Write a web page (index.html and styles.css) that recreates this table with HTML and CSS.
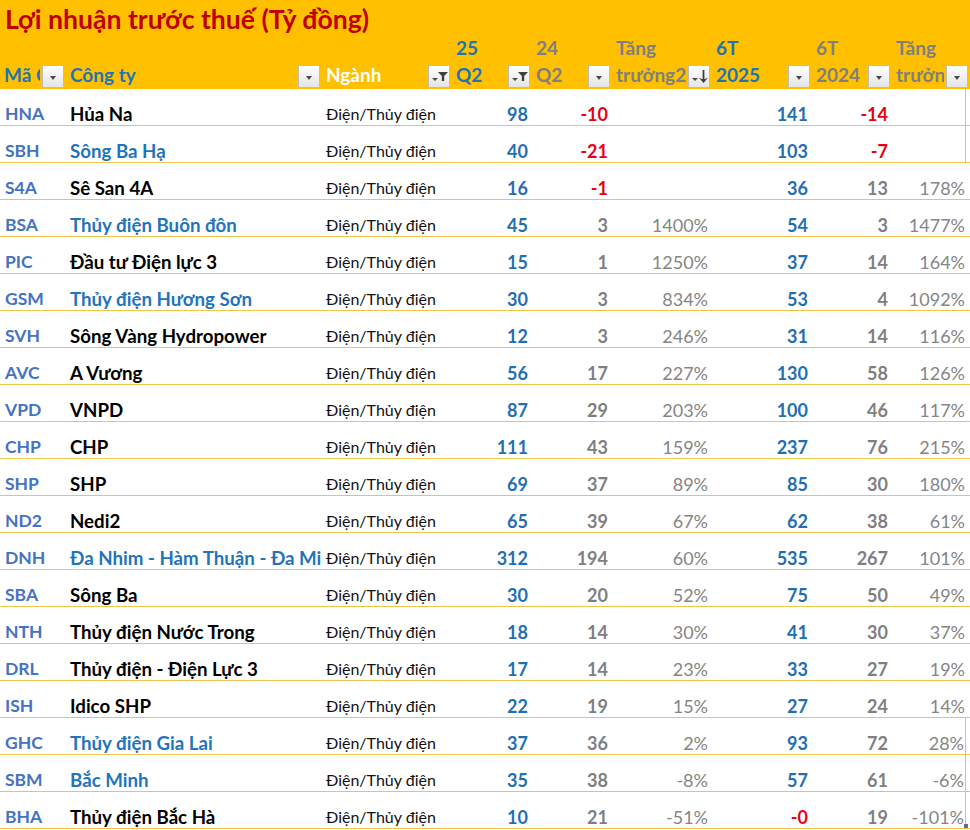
FILE: index.html
```html
<!DOCTYPE html>
<html lang="vi">
<head>
<meta charset="utf-8">
<title>Lợi nhuận trước thuế</title>
<link rel="stylesheet" href="styles.css">
</head>
<body>
<div class="sheet">
  <div class="head">
    <div class="title">Lợi nhuận trước thuế (Tỷ đồng)</div>
    <div class="hrow">
      <div class="hc blue"><span class="l1">&nbsp;</span><span class="l2">Mã CK</span><span class="btn dd"></span></div>
      <div class="hc blue"><span class="l1">&nbsp;</span><span class="l2">Công ty</span><span class="btn dd"></span></div>
      <div class="hc white"><span class="l1">&nbsp;</span><span class="l2">Ngành</span><span class="btn flt"></span></div>
      <div class="hc blue"><span class="l1">25</span><span class="l2">Q2</span><span class="btn flt"></span></div>
      <div class="hc grey"><span class="l1">24</span><span class="l2">Q2</span><span class="btn dd"></span></div>
      <div class="hc grey"><span class="l1">Tăng</span><span class="l2">trưởng2</span><span class="btn srt"></span></div>
      <div class="hc blue"><span class="l1">6T</span><span class="l2">2025</span><span class="btn dd"></span></div>
      <div class="hc grey"><span class="l1">6T</span><span class="l2">2024</span><span class="btn dd"></span></div>
      <div class="hc grey"><span class="l1">Tăng</span><span class="l2">trưởng</span><span class="btn dd"></span></div>
    </div>
  </div>
  <div class="body" id="body"></div>
  <span class="handle"></span>
</div>
<script src="app.js"></script>
</body>
</html>
```

FILE: app.js
```js
const rows = [
  ["HNA","Hủa Na",0,98,-10,"",141,-14,"",1],
  ["SBH","Sông Ba Hạ",1,40,-21,"",103,-7,"",1],
  ["S4A","Sê San 4A",0,16,-1,"",36,13,"178%",0],
  ["BSA","Thủy điện Buôn đôn",1,45,3,"1400%",54,3,"1477%",0],
  ["PIC","Đầu tư Điện lực 3",0,15,1,"1250%",37,14,"164%",0],
  ["GSM","Thủy điện Hương Sơn",1,30,3,"834%",53,4,"1092%",0],
  ["SVH","Sông Vàng Hydropower",0,12,3,"246%",31,14,"116%",0],
  ["AVC","A Vương",0,56,17,"227%",130,58,"126%",0],
  ["VPD","VNPD",0,87,29,"203%",100,46,"117%",0],
  ["CHP","CHP",0,111,43,"159%",237,76,"215%",0],
  ["SHP","SHP",0,69,37,"89%",85,30,"180%",0],
  ["ND2","Nedi2",0,65,39,"67%",62,38,"61%",0],
  ["DNH","Đa Nhim - Hàm Thuận - Đa Mi",1,312,194,"60%",535,267,"101%",0],
  ["SBA","Sông Ba",0,30,20,"52%",75,50,"49%",0],
  ["NTH","Thủy điện Nước Trong",0,18,14,"30%",41,30,"37%",0],
  ["DRL","Thủy điện - Điện Lực 3",0,17,14,"23%",33,27,"19%",0],
  ["ISH","Idico SHP",0,22,19,"15%",27,24,"14%",0],
  ["GHC","Thủy điện Gia Lai",1,37,36,"2%",93,72,"28%",1],
  ["SBM","Bắc Minh",1,35,38,"-8%",57,61,"-6%",1],
  ["BHA","Thủy điện Bắc Hà",0,10,21,"-51%","-0",19,"-101%",1]
];
const body = document.getElementById("body");
const neg = v => String(v).trim().startsWith("-");
rows.forEach(r => {
  const [tk, name, nb, q25, q24, g1, h25, h24, g2, boxed] = r;
  const row = document.createElement("div");
  row.className = "row" + (boxed ? " boxed" : "");
  row.innerHTML =
    `<div class="c tk">${tk}</div>` +
    `<div class="c co${nb ? " cb" : ""}">${name}</div>` +
    `<div class="c ng">Điện/Thủy điện</div>` +
    `<div class="c n nb${neg(q25) ? " red" : ""}">${q25}</div>` +
    `<div class="c n ${neg(q24) ? "red" : "ng2"}">${q24}</div>` +
    `<div class="c p">${g1}</div>` +
    `<div class="c n nb${neg(h25) ? " red" : ""}">${h25}</div>` +
    `<div class="c n ${neg(h24) ? "red" : "ng2"}">${h24}</div>` +
    `<div class="c p last">${g2}</div>` +
    `<div class="c pad"></div>`;
  body.appendChild(row);
});
```

FILE: styles.css
```css
html, body {
  margin: 0;
  padding: 0;
  background: #ffffff;
}
body {
  font-family: Lato, "Noto Sans", sans-serif;
  width: 970px;
  height: 830px;
  overflow: hidden;
}
.sheet {
  position: relative;
  width: 970px;
  height: 830px;
}
.head {
  background: #FFC000;
  height: 89px;
}
.title {
  height: 34px;
  padding: 4px 0 0 5px;
  box-sizing: border-box;
  line-height: 30px;
  font-size: 26.6px;
  font-weight: 700;
  color: #C00000;
  white-space: nowrap;
}
.hrow, .row {
  display: grid;
  grid-template-columns: 66px 256px 130px 80px 80px 100px 100px 80px 74px 4px;
}
.hrow {
  height: 55px;
}
.hc {
  position: relative;
  padding-left: 4px;
  font-size: 19px;
  font-weight: 700;
  line-height: 27px;
  white-space: nowrap;
  overflow: visible;
}
.hc:nth-child(9) { grid-column: 9 / span 2; }
.hc .l1, .hc .l2 { display: block; }
.hc .l2 { overflow: hidden; margin-right: 26px; }
.blue { color: #1F74B2; }
.grey { color: #7F7F7F; }
.white { color: #FFFFFF; }
.btn {
  position: absolute;
  right: 2px;
  bottom: 1px;
  width: 22px;
  height: 23px;
  border: 1px solid #BDBDBD;
  background: linear-gradient(#ffffff, #e4e4e4);
  box-sizing: border-box;
}
.btn::before, .btn::after {
  content: "";
  position: absolute;
}
.dd::before {
  left: 7px;
  top: 10px;
  border-left: 3px solid transparent;
  border-right: 3px solid transparent;
  border-top: 4px solid #4a4a4a;
}
.flt::before {
  left: 3px;
  top: 12px;
  border-left: 3px solid transparent;
  border-right: 3px solid transparent;
  border-top: 3px solid #4a4a4a;
}
.flt::after {
  left: 9px;
  top: 6px;
  width: 10px;
  height: 9px;
  background: #3f3f3f;
  clip-path: polygon(0 0, 100% 0, 62% 45%, 62% 100%, 38% 100%, 38% 45%);
}
.srt::before {
  left: 3px;
  top: 12px;
  border-left: 3px solid transparent;
  border-right: 3px solid transparent;
  border-top: 3px solid #4a4a4a;
}
.srt::after {
  left: 10px;
  top: 4px;
  width: 9px;
  height: 13px;
  background: #3f3f3f;
  clip-path: polygon(40% 0, 60% 0, 60% 72%, 100% 60%, 50% 100%, 0 60%, 40% 72%);
}
.row {
  height: 36px;
  border-bottom: 1px solid #EDC54A;
}
.c {
  padding-top: 14px;
  line-height: 22px;
  font-size: 18px;
  white-space: nowrap;
  overflow: hidden;
}
.tk {
  padding-left: 5px;
  font-size: 17.5px;
  font-weight: 700;
  color: #4472C4;
}
.co {
  padding-left: 4px;
  font-size: 18.7px;
  font-weight: 700;
  color: #000000;
}
.co.cb { color: #1F74BC; }
.ng {
  padding-left: 4px;
  font-size: 16px;
  color: #111111;
}
.n {
  text-align: right;
  padding-right: 4px;
  font-weight: 700;
}
.nb { color: #1F6FB2; }
.ng2 { color: #7F7F7F; }
.red { color: #E60012; }
.p {
  text-align: right;
  padding-right: 4px;
  color: #858585;
  font-size: 18px;
}
.p.last { padding-right: 1px; }
.boxed .last { border-right: 1px solid #EDC54A; }
.handle {
  position: absolute;
  left: 964px;
  top: 824px;
  width: 4px;
  height: 4px;
  background: #5B6B96;
}
```
